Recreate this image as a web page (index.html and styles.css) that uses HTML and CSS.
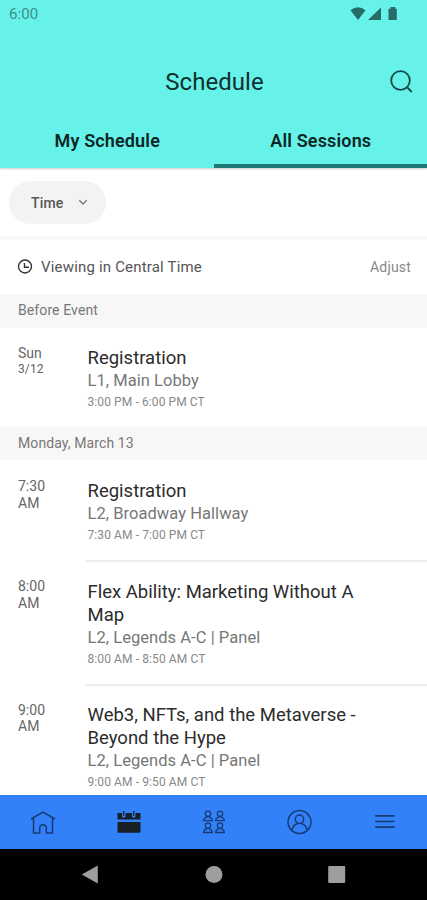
FILE: index.html
```html
<!DOCTYPE html>
<html lang="en">
<head>
<meta charset="utf-8">
<title>Schedule</title>
<link rel="stylesheet" href="styles.css">
</head>
<body>
<div class="app">
  <header class="header">
    <div class="status">
      <span class="clock">6:00</span>
      <svg class="status-icons" width="50" height="16" viewBox="0 0 50 16"><path d="M0.5 4.2Q8 -1.6 15.5 4.2L8 14Z"/><path d="M18 14H31V1.500Z"/><path d="M38.500 2.800h2V1h4.800v1.800h1.500V14h-8.300Z"/></svg>
    </div>
    <div class="titlebar">
      <h1 class="title">Schedule</h1>
      <svg class="search" width="24" height="24" viewBox="0 0 24 24"><circle cx="10.500" cy="10.500" r="9.300"/><path d="M16.800 17 21.800 22"/></svg>
    </div>
    <nav class="tabs">
      <div class="tab"><span>My Schedule</span></div>
      <div class="tab active"><span>All Sessions</span></div>
    </nav>
  </header>
  <main class="content">
    <div class="filters">
      <div class="chip"><span>Time</span><svg width="10" height="7" viewBox="0 0 10 7"><path d="M1.300 1.200 5 5 8.700 1.200"/></svg></div>
    </div>
    <div class="zone">
      <svg class="zone-icon" width="16" height="16" viewBox="0 0 16 16"><circle cx="8" cy="7.500" r="6.500"/><path d="M7.500 4V8.200H12"/></svg>
      <span>Viewing in Central Time</span>
      <span class="adjust">Adjust</span>
    </div>
    <div class="day">Before Event</div>
    <section class="session first">
      <div class="when"><span>Sun</span><span class="date">3/12</span></div>
      <div class="info"><h2 class="name">Registration</h2><p class="place">L1, Main Lobby</p><p class="hours">3:00 PM - 6:00 PM CT</p></div>
    </section>
    <div class="day second">Monday, March 13</div>
    <section class="session">
      <div class="when"><span>7:30</span><span>AM</span></div>
      <div class="info"><h2 class="name">Registration</h2><p class="place">L2, Broadway Hallway</p><p class="hours">7:30 AM - 7:00 PM CT</p></div>
    </section>
    <section class="session long">
      <div class="when"><span>8:00</span><span>AM</span></div>
      <div class="info ruled"><h2 class="name">Flex Ability: Marketing Without A<br>Map</h2><p class="place">L2, Legends A-C | Panel</p><p class="hours">8:00 AM - 8:50 AM CT</p></div>
    </section>
    <section class="session long">
      <div class="when"><span>9:00</span><span>AM</span></div>
      <div class="info ruled"><h2 class="name">Web3, NFTs, and the Metaverse -<br>Beyond the Hype</h2><p class="place">L2, Legends A-C | Panel</p><p class="hours">9:00 AM - 9:50 AM CT</p></div>
    </section>
  </main>
  <nav class="bottom">
    <svg width="28" height="28" viewBox="0 0 28 28"><path d="M1 11 13 4 25 11M3.500 10V25H9.700V20a3.300 3.300 0 0 1 6.600 0V25H22.500V10"/></svg>
    <svg width="28" height="28" viewBox="0 0 28 28"><path class="solid" d="M2.500 5H7V8a1.800 1.800 0 0 0 3.600 0V5h6.300V8a1.800 1.800 0 0 0 3.600 0V5H25.500V11.500H2.500ZM2.500 14H25.500V23.500a1.200 1.200 0 0 1-1.200 1.200H3.700a1.200 1.200 0 0 1-1.200-1.200ZM8.100 3h1.300v5H8.100ZM18.100 3h1.300v5h-1.300Z"/></svg>
    <svg class="people" width="28" height="28" viewBox="0 0 28 28">
      <defs><g id="person"><circle cx="5" cy="3.300" r="2.700"/><path d="M3.700 5.700 3.500 6.900Q.7 7.300.7 10.200H9.300Q9.300 7.300 6.500 6.900L6.300 5.700"/></g></defs>
      <use href="#person" x="3" y="2.500"/><use href="#person" x="15" y="2.500"/><use href="#person" x="3" y="14.300"/><use href="#person" x="15" y="14.300"/>
    </svg>
    <svg width="28" height="28" viewBox="0 0 28 28"><circle cx="14.500" cy="14" r="11.500"/><circle cx="14.500" cy="11.300" r="4.200"/><path d="M7 22.500C7.300 18 10 16.500 12.500 15.500M16.500 15.500C19 16.500 21.700 18 22 22.500"/></svg>
    <svg class="menu" width="28" height="28" viewBox="0 0 28 28"><path d="M5.200 7.800H24.600M5.200 13.500H24.600M5.200 19.200H24.600"/></svg>
  </nav>
  <div class="system">
    <svg width="18" height="20" viewBox="0 0 18 20"><path d="M.8 9.500 16.800.5V18.500Z"/></svg>
    <svg width="18" height="20" viewBox="0 0 18 20"><circle cx="9" cy="9.500" r="8.500"/></svg>
    <svg width="18" height="20" viewBox="0 0 18 20"><rect x=".2" y="1" width="17" height="17" rx="1"/></svg>
  </div>
</div>
</body>
</html>
```

FILE: styles.css
```css
* { box-sizing: border-box; }
body { margin: 0; font-family: Roboto, "Liberation Sans", sans-serif; background: #fff; }
h1, h2, p { margin: 0; font-weight: 400; }
svg { display: block; flex: none; }
.app { width: 427px; height: 900px; display: flex; flex-direction: column; overflow: hidden; }

.header { flex: none; height: 168px; background: #67f2e9; display: flex; flex-direction: column; box-shadow: 0 1px 2px rgba(0, 0, 0, .2); }
.status { height: 28px; display: flex; justify-content: space-between; padding: 6px 27px 0 9px; }
.clock { font-size: 15px; line-height: 17px; letter-spacing: .1px; color: #3b8f8a; }
.status-icons { fill: #276b67; }
.titlebar { height: 87px; display: grid; grid-template-columns: 1fr auto 1fr; align-items: center; padding: 20px 13px 0 15px; }
.title { grid-column: 2; font-size: 24px; line-height: 30px; letter-spacing: .05px; color: #102f2e; }
.search { justify-self: end; fill: none; stroke: #174b48; stroke-width: 1.8; }
.tabs { flex: 1; display: grid; grid-template-columns: 1fr 1fr; }
.tab { display: flex; justify-content: center; padding: 15px 0 0 1px; font-size: 18px; line-height: 22px; letter-spacing: .15px; font-weight: 600; color: #0c2625; }
.tab.active { border-bottom: 4px solid #1d7772; }

.content { flex: none; height: 627px; overflow: hidden; }
.filters { height: 72px; border-bottom: 4px solid #f7f7f7; padding: 13px 9px; }
.chip { width: 97px; height: 43px; border-radius: 22px; background: #f3f3f3; display: flex; align-items: center; justify-content: space-between; padding: 0 18px 0 22px; font-size: 14px; letter-spacing: .15px; font-weight: 500; color: #555; }
.chip svg { fill: none; stroke: #777; stroke-width: 1.3; }
.zone { height: 54px; display: flex; align-items: center; padding: 0 16px 0 17px; font-size: 15px; letter-spacing: .18px; color: #555; }
.zone-icon { fill: none; stroke: #333; stroke-width: 1.4; margin-right: 8px; }
.adjust { margin-left: auto; font-size: 14px; color: #888; }
.day { height: 34px; background: #f7f7f7; padding-left: 18px; font-size: 14px; line-height: 33px; letter-spacing: .1px; color: #777; }
.second { height: 33px; }

.session { display: flex; height: 100px; padding-left: 18px; }
.session.first { height: 99px; }
.session.long { height: 123.500px; }
.when { width: 67px; padding-top: 18px; display: flex; flex-direction: column; font-size: 14px; line-height: 16.500px; color: #666; }
.date { font-size: 12px; line-height: 14px; letter-spacing: .1px; }
.first .when { padding-top: 17px; }
.info { flex: 1; padding: 19px 0 0 2.500px; white-space: nowrap; }
.first .info { padding-top: 18px; }
.info.ruled { border-top: 2px solid #eee; padding-top: 17.500px; }
.name { padding-top: 1px; margin-bottom: -1px; font-size: 18.500px; line-height: 23px; color: #2c2c2c; }
.place { font-size: 16.500px; line-height: 23px; letter-spacing: .05px; color: #777; }
.hours { font-size: 12px; line-height: 20px; letter-spacing: .1px; color: #888; }

.bottom { flex: none; height: 54px; background: #3381f9; display: grid; grid-template-columns: repeat(5, 1fr); align-items: center; justify-items: center; padding-left: 1px; }
.bottom svg { fill: none; stroke: #183b72; stroke-width: 1.5; }
.bottom .solid { fill: #172027; stroke: none; }
.bottom .people { stroke-width: 1.3; }
.bottom .menu { stroke-width: 1.7; }
.system { flex: 1; background: #000; display: flex; justify-content: space-between; align-items: center; padding: 0 81px; }
.system svg { fill: #9e9e9e; }
```
